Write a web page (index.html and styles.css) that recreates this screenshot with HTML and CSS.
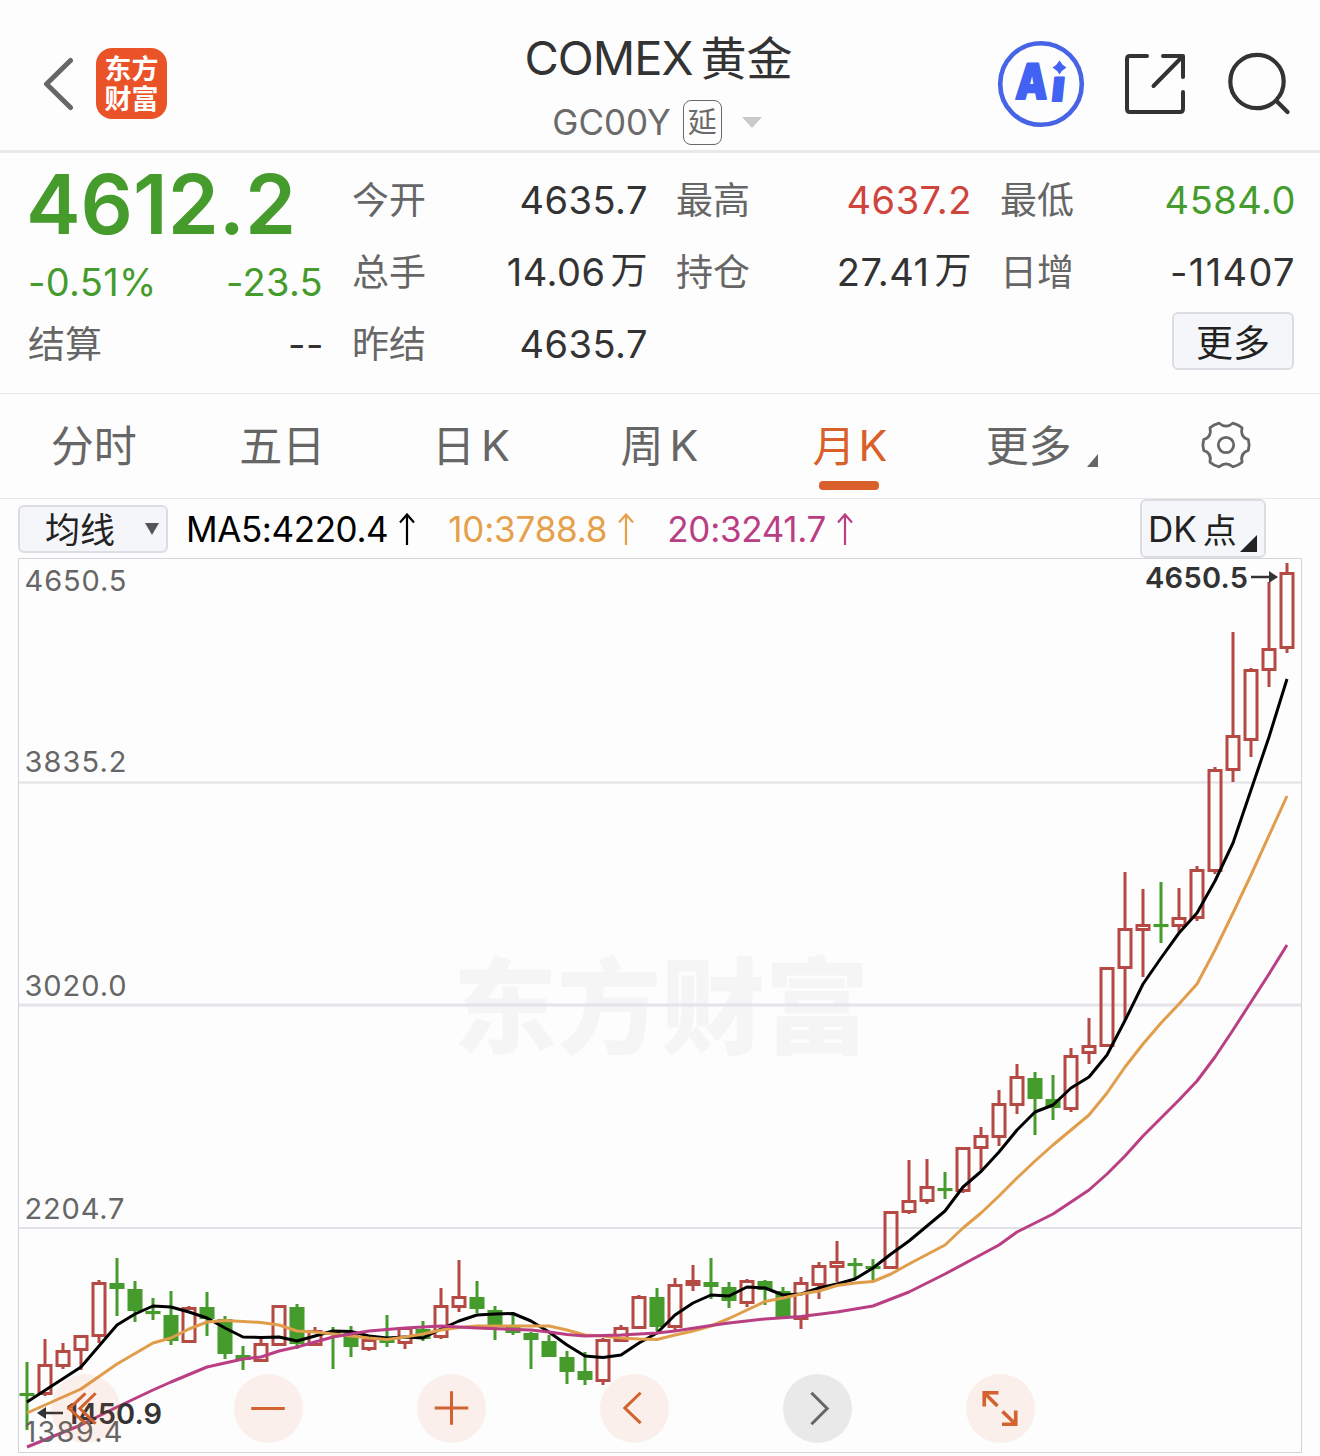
FILE: index.html
```html
<!DOCTYPE html>
<html lang="zh-CN">
<head>
    <meta charset="UTF-8">
    <meta name="viewport" content="width=device-width, initial-scale=1.0">
    <title>COMEX黄金</title>
    <link rel="stylesheet" href="styles.css">
</head>
<body>
    <header class="header">
        <div class="header-left">
            <svg class="back" width="34" height="56" viewBox="0 0 34 56" fill="none" stroke="#666" stroke-width="5" stroke-linecap="round" stroke-linejoin="round">
                <path d="M28.500 5.500L4.500 29L28.500 52.500"/>
            </svg>
            <div class="logo"><span>东方</span><span>财富</span></div>
        </div>
        <div class="title">
            <h1><span class="title-en">COMEX</span>黄金</h1>
            <div class="subtitle">
                <span class="code">GC00Y</span>
                <span class="delay">延</span>
                <svg width="20" height="11" viewBox="0 0 20 11"><path d="M0 0H20L10 11Z" fill="#c9c9c9"/></svg>
            </div>
        </div>
        <div class="header-right">
            <svg width="88" height="88" viewBox="0 0 88 88">
                <circle cx="44" cy="44" r="40.800" fill="none" stroke="#4864e6" stroke-width="4.600"/>
                <g fill="#4162f2" stroke="#4162f2" stroke-width="2" stroke-linejoin="round">
                    <text class="ai-text" transform="translate(18 58.500) skewX(-3)" x="0" y="0" textLength="32" lengthAdjust="spacingAndGlyphs">A</text>
                    <text class="ai-text ai-stem" transform="translate(53.500 61) skewX(-6)" x="0" y="0" textLength="13" lengthAdjust="spacingAndGlyphs">ı</text>
                </g>
                <path d="M62.500 20.500Q65 25 69.500 27.500Q65 30 62.500 34.500Q60 30 55.500 27.500Q60 25 62.500 20.500Z" fill="#4162f2"/>
            </svg>
            <svg class="share" width="62" height="62" viewBox="0 0 62 62" fill="none" stroke="#333" stroke-width="4" stroke-linecap="round" stroke-linejoin="round">
                <path d="M23 3H6Q3 3 3 6V56Q3 59 6 59H56Q59 59 59 56V39M39 3H59V24M59 3L29.500 33"/>
            </svg>
            <svg width="64" height="64" viewBox="0 0 64 64" fill="none" stroke="#333" stroke-width="4.200" stroke-linecap="round">
                <circle cx="30" cy="29.500" r="26.700"/>
                <path d="M50.500 50L60.500 60"/>
            </svg>
        </div>
    </header>

    <section class="quote">
        <div class="quote-col">
            <div class="price">4612.2</div>
            <div class="change"><span>-0.51%</span><span>-23.5</span></div>
            <div class="row row-settle"><label>结算</label><span class="value">--</span></div>
        </div>
        <div class="quote-col">
            <div class="row"><label>今开</label><span class="value">4635.7</span></div>
            <div class="row"><label>总手</label><span class="value">14.06<i>万</i></span></div>
            <div class="row"><label>昨结</label><span class="value">4635.7</span></div>
        </div>
        <div class="quote-col">
            <div class="row"><label>最高</label><span class="value up">4637.2</span></div>
            <div class="row"><label>持仓</label><span class="value">27.41<i>万</i></span></div>
        </div>
        <div class="quote-col">
            <div class="row"><label>最低</label><span class="value down">4584.0</span></div>
            <div class="row"><label>日增</label><span class="value value-wide">-11407</span></div>
            <div class="row row-more"><button class="more">更多</button></div>
        </div>
    </section>

    <nav class="tabs">
        <a class="tab">分时</a>
        <a class="tab">五日</a>
        <a class="tab">日<b>K</b></a>
        <a class="tab">周<b>K</b></a>
        <a class="tab active">月<b>K</b></a>
        <a class="tab tab-more">更多<svg width="11" height="13" viewBox="0 0 11 13"><path d="M11 0V13H0Z" fill="#666"/></svg></a>
        <a class="tab tab-settings">
            <svg width="52" height="52" viewBox="-26 -26 52 52" fill="none" stroke="#666" stroke-width="2.800" stroke-linejoin="round">
                <path d="M22.300 -5.300Q24 0 22.300 5.300Q13.900 8 16 17.200Q12.400 20.500 6.800 21.800Q0 16 -6.800 21.800Q-12.400 20.500 -16 17.200Q-13.900 8 -22.300 5.300Q-24 0 -22.300 -5.300Q-13.900 -8 -16 -17.200Q-12.400 -20.500 -6.800 -21.800Q0 -16 6.800 -21.800Q12.400 -20.500 16 -17.200Q13.900 -8 22.300 -5.300Z"/>
                <circle r="7.700"/>
            </svg>
        </a>
    </nav>

    <div class="ma-bar">
        <button class="ma-select"><span>均线</span><svg width="14" height="12" viewBox="0 0 14 12"><path d="M0 0H14L7 12Z" fill="#555"/></svg></button>
        <div class="ma ma5"><span>MA5:4220.4</span><svg class="arrow" viewBox="0 0 16 32"><path d="M8 32V2M1 9.500L8 1.500L15 9.500"/></svg></div>
        <div class="ma ma10"><span>10:3788.8</span><svg class="arrow" viewBox="0 0 16 32"><path d="M8 32V2M1 9.500L8 1.500L15 9.500"/></svg></div>
        <div class="ma ma20"><span>20:3241.7</span><svg class="arrow" viewBox="0 0 16 32"><path d="M8 32V2M1 9.500L8 1.500L15 9.500"/></svg></div>
        <button class="dk"><span>DK</span>点<svg width="17" height="17" viewBox="0 0 17 17"><path d="M17 0V17H0Z" fill="#222"/></svg></button>
    </div>

    <main class="chart">
        <svg id="kline" width="1284" height="895" viewBox="18 558 1284 895">
            <text class="watermark" x="453" y="1046" textLength="416">东方财富</text>
            <g class="grid">
                <rect x="18.500" y="558.500" width="1283" height="894"/>
                <path d="M19 782.500H1301M19 1228H1301"/>
                <path class="grid-mid" d="M19 1005H1301"/>
            </g>
            <g id="candles"></g>
            <g id="averages"></g>
            <g class="axis">
                <text x="24.500" y="591" textLength="102">4650.5</text>
                <text x="24.500" y="772" textLength="102">3835.2</text>
                <text x="24.500" y="996" textLength="102">3020.0</text>
                <text x="24.500" y="1219" textLength="100">2204.7</text>
                <text x="24.500" y="1442" textLength="98">1389.4</text>
            </g>
            <g class="mark">
                <text x="1145" y="588" textLength="103">4650.5</text>
                <path d="M1251 577H1270" />
                <path class="mark-head" d="M1269 571L1278 577L1269 583Z"/>
                <text x="66" y="1423.500" textLength="96">1450.9</text>
                <path d="M63 1413H45"/>
                <path class="mark-head" d="M46 1407L37 1413L46 1419Z"/>
            </g>
        </svg>
        <div class="controls">
            <button class="control"><svg viewBox="0 0 68 68"><path d="M34 19L18 34L34 49M44 19L28.500 34L44 49"/></svg></button>
            <button class="control"><svg viewBox="0 0 68 68"><path d="M17 34H50"/></svg></button>
            <button class="control"><svg viewBox="0 0 68 68"><path d="M17.500 33.500H50.500M34 17V50"/></svg></button>
            <button class="control"><svg viewBox="0 0 68 68"><path d="M40 18.500L24.500 33.500L40 48.500"/></svg></button>
            <button class="control disabled"><svg viewBox="0 0 68 68"><path d="M28 18.500L43.500 34L28 49.500"/></svg></button>
            <button class="control"><svg class="expand" viewBox="0 0 68 68"><path d="M18 32V18.500H32M18 18.500L31 31.500M49 36V49.500H35.500M49 49.500L36 37"/></svg></button>
        </div>
    </main>
    <script src="chart.js"></script>
</body>
</html>
```
FILE: styles.css
```css
* {
    box-sizing: border-box;
}
body {
    margin: 0;
    width: 1320px;
    height: 1456px;
    overflow: hidden;
    background: #fdfdfd;
    color: #333;
    font-family: Inter, "Noto Sans CJK SC", sans-serif;
}
button {
    font-family: inherit;
    color: #222;
    padding: 0;
    background: #f5f6f9;
    border: 2px solid #dcdde2;
    border-radius: 6px;
}
svg {
    display: block;
    flex: none;
}

/* header */
.header {
    display: grid;
    grid-template-columns: 1fr auto 1fr;
    height: 153px;
    border-bottom: 3px solid #e9e9e9;
}
.header-left {
    display: flex;
    align-items: center;
    gap: 20px;
    padding: 16px 0 0 42px;
}
.logo {
    display: flex;
    flex-direction: column;
    justify-content: center;
    align-items: center;
    width: 71px;
    height: 71px;
    padding-top: 3px;
    border-radius: 16px;
    background: #ea5328;
    color: #fff;
    font-size: 27px;
    font-weight: 700;
    line-height: 30px;
}
.title {
    display: flex;
    flex-direction: column;
    align-items: center;
    padding: 29px 3px 0 0;
}
.title h1 {
    display: flex;
    gap: 8px;
    margin: 0;
    font-size: 46px;
    font-weight: 400;
    line-height: 58px;
}
.title-en {
    font-size: 47px;
    letter-spacing: -1px;
}
.subtitle {
    display: flex;
    align-items: center;
    margin: 13px 3px 0 0;
    color: #6a6a6a;
}
.code {
    font-size: 35px;
    line-height: 42px;
    padding-bottom: 2px;
}
.delay {
    width: 39px;
    height: 45px;
    margin: 0 20px 0 12px;
    border: 1.5px solid #6a6a6a;
    border-radius: 8px;
    font-size: 29px;
    line-height: 43px;
    text-align: center;
}
.header-right {
    display: flex;
    align-items: center;
    justify-content: flex-end;
    padding: 18px 29px 0 0;
    gap: 40px;
}
.share {
    margin: 0 1px 0 -1px;
}
.ai-text {
    font-size: 49px;
    font-weight: 900;
}
.ai-stem {
    font-size: 43px;
}

/* quote */
.quote {
    display: grid;
    grid-template-columns: repeat(4, 1fr);
    column-gap: 29px;
    height: 241px;
    padding: 11px 25px 0 28px;
    border-bottom: 1px solid #e8e8e8;
}
.price {
    height: 83px;
    margin-left: -2px;
    color: #459b2b;
    font-size: 82px;
    font-weight: 600;
    line-height: 82px;
}
.change {
    display: flex;
    justify-content: space-between;
    height: 61px;
    padding-top: 5px;
    color: #459b2b;
    font-size: 38px;
    line-height: 61px;
    letter-spacing: 0.3px;
}
.row {
    display: flex;
    align-items: center;
    justify-content: space-between;
    height: 72px;
    font-size: 37px;
}
.row label {
    padding-bottom: 4px;
    color: #666;
}
.value {
    display: flex;
    align-items: center;
    margin-right: -1px;
    font-size: 38px;
    line-height: 46px;
    letter-spacing: 0.5px;
}
.value-wide {
    letter-spacing: 1.4px;
}
.value i {
    padding-bottom: 2px;
    margin-left: 5px;
    font-style: normal;
    font-size: 37px;
}
.up {
    color: #cf443c;
}
.down {
    color: #459b2b;
}
.row-more {
    justify-content: flex-end;
}
.more {
    width: 122px;
    height: 58px;
    margin: 0 1px 6px 0;
    padding-bottom: 4px;
    font-size: 37px;
}

/* tabs */
.tabs {
    display: grid;
    grid-template-columns: repeat(7, 1fr);
    height: 105px;
    border-bottom: 1px solid #e8e8e8;
}
.tab {
    position: relative;
    display: flex;
    align-items: center;
    justify-content: center;
    padding: 0 1px 7px 0;
    color: #666;
    font-size: 43px;
}
.tab b {
    margin: 4px 0 0 6px;
    font-weight: 400;
}
.tab.active {
    color: #d9602b;
    padding: 0 0 7px 3px;
}
.tab.active b {
    margin-left: 3px;
}
.tab.active::after {
    content: "";
    position: absolute;
    left: 65px;
    bottom: 8px;
    width: 60px;
    height: 9px;
    border-radius: 4px;
    background: #d9602b;
}
.tab-more {
    padding-left: 10px;
}
.tab-more svg {
    margin: 36px 0 0 15px;
}
.tab-settings {
    padding: 0 0 3px;
}

/* moving averages */
.ma-bar {
    display: flex;
    align-items: center;
    height: 59px;
    padding: 0 54px 0 18px;
    font-size: 35px;
}
.ma-select {
    display: flex;
    align-items: center;
    justify-content: space-between;
    width: 150px;
    height: 48px;
    margin-right: 18px;
    padding: 0 7px 0 25px;
    font-size: 35px;
}
.ma-select span {
    padding-bottom: 3px;
}
.ma {
    display: flex;
    align-items: center;
    margin-right: 33px;
    letter-spacing: -0.4px;
}
.ma5 {
    color: #000;
}
.ma10 {
    color: #e6a04a;
    letter-spacing: -0.2px;
}
.ma20 {
    color: #b93e83;
    letter-spacing: -0.3px;
}
.arrow {
    width: 16px;
    height: 32px;
    margin-left: 11px;
    fill: none;
    stroke: currentColor;
    stroke-width: 2.2;
}
.dk {
    display: flex;
    align-items: center;
    width: 126px;
    height: 59px;
    margin-left: auto;
    padding-left: 6px;
    font-size: 34px;
}
.dk span {
    margin-right: 6px;
    font-size: 35px;
}
.dk svg {
    margin: 29px 0 0 3px;
}

/* chart */
.chart {
    position: relative;
    width: 1284px;
    height: 895px;
    margin-left: 18px;
}
.watermark {
    fill: #f5f5f5;
    font-size: 104px;
    font-weight: 900;
}
.grid {
    fill: none;
    stroke: #d4d5da;
}
.grid path {
    stroke: #e1e2e8;
    stroke-width: 2;
}
.grid .grid-mid {
    stroke: #e4e4ea;
    stroke-width: 3;
}
.candle-up {
    fill: none;
    stroke: #b44a43;
    stroke-width: 3;
}
.candle-down {
    fill: #459b2b;
    stroke: #459b2b;
    stroke-width: 3;
}
.line {
    fill: none;
    stroke-width: 3;
    stroke-linejoin: round;
}
.line-ma5 {
    stroke: #000;
}
.line-ma10 {
    stroke: #e09d4b;
}
.line-ma20 {
    stroke: #b93e83;
}
.axis {
    fill: #666;
    font-size: 29px;
}
.mark {
    fill: #333;
    font-size: 29px;
    font-weight: 600;
}
.mark path {
    stroke: #333;
    stroke-width: 2.5;
}
.mark .mark-head {
    stroke: none;
}
.controls {
    position: absolute;
    left: 33px;
    top: 816px;
    display: flex;
    gap: 114px;
}
.control {
    width: 69px;
    height: 69px;
    border: 0;
    border-radius: 50%;
    background: rgba(226, 96, 40, 0.09);
}
.control svg {
    fill: none;
    stroke: #d2622f;
    stroke-width: 3;
}
.control .expand {
    stroke-width: 3.6;
}
.control.disabled {
    background: #e9e9e9;
}
.control.disabled svg {
    stroke: #666;
}
```
FILE: chart.js
```js
const SVG_NS = "http://www.w3.org/2000/svg";
const START_X = 27;
const STEP = 18;

// direction, high, body top, body bottom, low
const candles = [
    ["d", 1362, 1393, 1395, 1430], ["u", 1339, 1364, 1395, 1396], ["u", 1343, 1350, 1367, 1369],
    ["u", 1335, 1335, 1351, 1370], ["u", 1280, 1282, 1337, 1343], ["d", 1258, 1283, 1289, 1316],
    ["d", 1281, 1289, 1311, 1322], ["d", 1298, 1311, 1314, 1320], ["d", 1291, 1315, 1341, 1345],
    ["u", 1306, 1307, 1343, 1343], ["d", 1292, 1307, 1319, 1336], ["d", 1316, 1319, 1354, 1359],
    ["d", 1346, 1355, 1360, 1370], ["u", 1338, 1343, 1362, 1362], ["u", 1305, 1305, 1346, 1346],
    ["d", 1304, 1307, 1344, 1349], ["u", 1327, 1330, 1346, 1346], ["d", 1327, 1331, 1334, 1369],
    ["d", 1326, 1333, 1347, 1357], ["u", 1335, 1339, 1350, 1351], ["d", 1315, 1338, 1343, 1347],
    ["u", 1327, 1327, 1344, 1349], ["d", 1321, 1329, 1339, 1341], ["u", 1288, 1305, 1338, 1339],
    ["u", 1260, 1296, 1308, 1312], ["d", 1281, 1297, 1309, 1313], ["d", 1306, 1310, 1325, 1340],
    ["d", 1313, 1327, 1333, 1335], ["d", 1332, 1333, 1340, 1369], ["d", 1335, 1341, 1357, 1357],
    ["d", 1351, 1357, 1372, 1384], ["d", 1352, 1371, 1380, 1385], ["u", 1338, 1339, 1382, 1385],
    ["u", 1325, 1327, 1342, 1342], ["u", 1295, 1296, 1329, 1329], ["d", 1288, 1297, 1327, 1331],
    ["u", 1278, 1284, 1328, 1331], ["u", 1265, 1280, 1286, 1291], ["d", 1258, 1282, 1287, 1299],
    ["d", 1282, 1287, 1301, 1308], ["u", 1279, 1280, 1304, 1307], ["d", 1280, 1281, 1290, 1305],
    ["d", 1287, 1291, 1317, 1317], ["u", 1277, 1282, 1320, 1329], ["u", 1262, 1265, 1286, 1299],
    ["u", 1241, 1261, 1268, 1282], ["d", 1258, 1263, 1266, 1279], ["d", 1259, 1266, 1269, 1281],
    ["u", 1211, 1211, 1269, 1269], ["u", 1160, 1200, 1213, 1214], ["u", 1159, 1186, 1202, 1204],
    ["d", 1172, 1188, 1190, 1199], ["u", 1147, 1147, 1192, 1193], ["u", 1127, 1135, 1149, 1170],
    ["u", 1090, 1103, 1138, 1146], ["u", 1064, 1076, 1106, 1114], ["d", 1072, 1078, 1099, 1135],
    ["d", 1075, 1099, 1108, 1120], ["u", 1048, 1055, 1110, 1112], ["u", 1018, 1045, 1054, 1064],
    ["u", 967, 967, 1047, 1047], ["u", 872, 928, 969, 1020], ["u", 889, 924, 931, 977],
    ["d", 882, 924, 926, 943], ["u", 888, 917, 927, 932], ["u", 866, 869, 919, 921],
    ["u", 767, 769, 872, 874], ["u", 632, 735, 771, 782], ["u", 668, 669, 741, 757],
    ["u", 582, 648, 671, 687], ["u", 563, 572, 649, 653]
];

const averages = {
    ma5: "27,1402 81,1367 117,1325 135,1314 153,1306 171,1307 189,1312 207,1318 225,1328 243,1337 261,1337.5 279,1337 297,1341 315,1336 333,1331 351,1331.5 369,1336 387,1338 405,1337 423,1338 441,1329 459,1321 477,1315 495,1314 513,1313.5 531,1321 549,1332 567,1345 585,1356 603,1357.5 621,1355 639,1343 657,1333 675,1315 693,1303 711,1295 729,1296 747,1287 765,1288 783,1295 801,1294 819,1288 837,1284 855,1279 873,1268 891,1254 909,1241 927,1226 945,1211 963,1187 981,1171.5 999,1152 1017,1130 1035,1112 1053,1105 1071,1088 1089,1077 1107,1055 1125,1020.5 1143,984 1161,958 1179,933 1197,913 1215,881 1233,843 1251,790 1269,737 1287,679",
    ma10: "27,1413 81,1389 117,1364 153,1343 171,1338 189,1329 207,1322 225,1320.5 243,1321.5 261,1322.5 279,1325 297,1331 315,1332 333,1334 351,1336 369,1338 387,1339.5 405,1337 423,1334 441,1330 459,1327.5 477,1326 513,1326 549,1326 567,1330 585,1335 603,1336 621,1338 639,1339 657,1339.5 675,1335 693,1331 711,1326 729,1318.5 747,1310 765,1301.5 783,1298 801,1294 819,1291 837,1285.5 855,1283 873,1281.5 891,1274 909,1264 945,1245 963,1228 981,1213 999,1196 1017,1178 1035,1161 1053,1145 1089,1115 1107,1093 1125,1067 1143,1044 1161,1023 1179,1004 1197,984 1215,950 1233,913 1251,875 1287,796",
    ma20: "27,1447 81,1425 117,1407 153,1390 171,1382 207,1367 243,1359 261,1357 279,1351 297,1347 315,1342 333,1337 369,1331 405,1328 441,1326 477,1328 531,1330 549,1332 567,1334.5 585,1336 621,1335 657,1333 675,1331 711,1325.5 729,1323 765,1319 801,1316.5 837,1312 873,1306 909,1292 945,1274 999,1245 1017,1232 1053,1214 1089,1190 1107,1174 1125,1156 1143,1136 1161,1118 1179,1100 1197,1081 1215,1057 1233,1030 1251,1002 1269,974 1287,945"
};

function add(parent, tag, attrs) {
    const el = document.createElementNS(SVG_NS, tag);
    for (const key in attrs) {
        el.setAttribute(key, attrs[key]);
    }
    parent.appendChild(el);
}

const candleGroup = document.getElementById("candles");
candles.forEach(([dir, high, top, bottom, low], i) => {
    const x = START_X + i * STEP;
    const height = Math.max(bottom - top - 3, 0.1);
    const cls = dir === "u" ? "candle-up" : "candle-down";
    // the wick is split so that hollow bodies stay empty
    add(candleGroup, "path", { class: cls, d: `M${x} ${high}V${top + 1}M${x} ${bottom - 1}V${low}` });
    add(candleGroup, "rect", { class: cls, x: x - 6, y: top + 1.5, width: 12, height: height });
});

const averageGroup = document.getElementById("averages");
for (const name of ["ma5", "ma10", "ma20"]) {
    add(averageGroup, "polyline", { class: `line line-${name}`, points: averages[name] });
}
```
